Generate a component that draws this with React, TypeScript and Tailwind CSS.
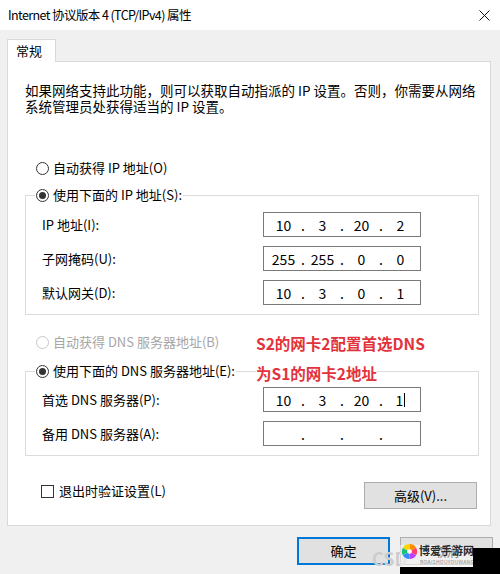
import React from "react";

const FONT = "[font-family:'Noto_Sans_CJK_SC',sans-serif]";

function Radio({ checked, disabled }: { checked?: boolean; disabled?: boolean }) {
  return (
    <span
      className={`flex h-[13px] w-[13px] shrink-0 items-center justify-center rounded-full border bg-white ${
        disabled ? "border-[#c8c8c8]" : "border-[#333333]"
      }`}
    >
      {checked && <span className="h-[7px] w-[7px] rounded-full bg-[#333333]" />}
    </span>
  );
}

function RadioLabel({ label, checked, disabled }: { label: string; checked?: boolean; disabled?: boolean }) {
  return (
    <div className={`flex h-[20px] items-center gap-[4px] ${disabled ? "text-[#a6a6a6]" : "text-black"}`}>
      <Radio checked={checked} disabled={disabled} />
      <span className="whitespace-nowrap">{label}</span>
    </div>
  );
}

function IpBox({ octets, caret }: { octets: string[]; caret?: boolean }) {
  return (
    <div className="grid h-[25px] w-[158px] grid-cols-[35px_4px_35px_4px_35px_4px_35px] items-center border border-[#7a7a7a] bg-white pl-[2px] text-[14px] leading-none text-black">
      {octets.map((o, i) => (
        <React.Fragment key={i}>
          {i > 0 && <span className="text-center">.</span>}
          <span className="flex items-center justify-center">
            {o}
            {caret && i === 3 && <span className="ml-[1px] inline-block h-[14px] w-px bg-black" />}
          </span>
        </React.Fragment>
      ))}
    </div>
  );
}

function FieldRow({ label, octets, caret }: { label: string; octets: string[]; caret?: boolean }) {
  return (
    <div className="grid grid-cols-[221px_158px] items-center pl-[16px]">
      <span className="whitespace-nowrap">{label}</span>
      <IpBox octets={octets} caret={caret} />
    </div>
  );
}

function GroupBox({ legend, children, className }: { legend: React.ReactNode; children: React.ReactNode; className?: string }) {
  return (
    <fieldset className={`border border-[#dcdcdc] px-0 pb-[9px] ${className ?? ""}`}>
      <legend className="ml-[9px] px-[1px]">{legend}</legend>
      {children}
    </fieldset>
  );
}

function Button({ children, primary, className }: { children: React.ReactNode; primary?: boolean; className?: string }) {
  return (
    <div
      className={`flex items-center justify-center bg-[#e1e1e1] text-black ${
        primary ? "border-2 border-[#0078d7]" : "border border-[#adadad]"
      } ${className ?? ""}`}
    >
      {children}
    </div>
  );
}

export default function App() {
  return (
    <div className={`relative h-[574px] w-[500px] overflow-hidden bg-[#f0f0f0] text-[13px] leading-[20px] text-black ${FONT}`}>
      {/* title bar */}
      <div className="flex h-[30px] items-center justify-between bg-white pl-[8px] pr-[10px]">
        <span className="whitespace-nowrap text-[12.5px] tracking-[-0.6px]">Internet 协议版本 4 (TCP/IPv4) 属性</span>
        <svg width="11" height="11" viewBox="0 0 11 11">
          <path d="M0.5 0.5 L10.5 10.5 M10.5 0.5 L0.5 10.5" stroke="#111" strokeWidth="1" fill="none" />
        </svg>
      </div>

      {/* tab area */}
      <div className="pl-[7px] pt-[9px]">
        <div className="relative z-10 -mb-px flex h-[23px] w-[49px] items-start border-l border-r border-t border-[#d9d9d9] bg-white pl-[8px] pt-[1px]">
          常规
        </div>
        <div className="w-[484px] border border-[#d9d9d9] bg-white pb-[16px] pl-[17px] pr-[11px] pt-[20px]">
          <p className="whitespace-nowrap text-[13.5px] leading-[16px]">
            如果网络支持此功能，则可以获取自动指派的 IP 设置。否则，你需要从网络
            <br />
            系统管理员处获得适当的 IP 设置。
          </p>

          <div className="ml-[11px] mt-[44px]">
            <RadioLabel label="自动获得 IP 地址(O)" />
          </div>

          <GroupBox className="mt-[7px]" legend={<RadioLabel label="使用下面的 IP 地址(S):" checked />}>
            <div className="flex flex-col gap-[9px] pt-[7px]">
              <FieldRow label="IP 地址(I):" octets={["10", "3", "20", "2"]} />
              <FieldRow label="子网掩码(U):" octets={["255", "255", "0", "0"]} />
              <FieldRow label="默认网关(D):" octets={["10", "3", "0", "1"]} />
            </div>
          </GroupBox>

          <div className="ml-[11px] mt-[17px]">
            <RadioLabel label="自动获得 DNS 服务器地址(B)" disabled />
          </div>

          <GroupBox className="mt-[9px]" legend={<RadioLabel label="使用下面的 DNS 服务器地址(E):" checked />}>
            <div className="flex flex-col gap-[9px] pt-[6px]">
              <FieldRow label="首选 DNS 服务器(P):" octets={["10", "3", "20", "1"]} caret />
              <FieldRow label="备用 DNS 服务器(A):" octets={["", "", "", ""]} />
            </div>
          </GroupBox>

          <div className="mt-[26px] flex items-start justify-between pr-[2px]">
            <div className="ml-[16px] flex h-[18px] items-center gap-[5px]">
              <span className="h-[13px] w-[13px] border border-[#333333] bg-white" />
              <span className="whitespace-nowrap">退出时验证设置(L)</span>
            </div>
            <Button className="h-[27px] w-[113px]">高级(V)...</Button>
          </div>
        </div>
      </div>

      {/* dialog buttons */}
      <div className="mt-[11px] flex justify-end gap-[10px] pr-[7px]">
        <Button primary className="h-[28px] w-[93px]">确定</Button>
        <Button className="h-[28px] w-[93px]">取消</Button>
      </div>

      {/* annotation */}
      <div className="absolute left-[256px] top-[328px] text-[15.5px] font-bold leading-[30px] text-[#e3323b]">
        <div className="whitespace-nowrap">S2的网卡2配置首选DNS</div>
        <div className="whitespace-nowrap">
          <span className="bg-white">为S1的网卡2地址</span>
        </div>
      </div>

      {/* site watermark */}
      <span className="absolute left-[372px] top-[547px] text-[18px] font-semibold leading-[22px] text-[#cdcdcd]">CSD</span>
      <div className="absolute left-[400px] top-[545px] h-[22px] w-[73px] bg-white/50" />
      <svg className="absolute left-[401px] top-[543px]" width="17" height="17" viewBox="0 0 18 18">
        <path d="M9 9 L9 1 A8 8 0 0 1 16 5 Z" fill="#ff8a00" />
        <path d="M9 9 L16 5 A8 8 0 0 1 16 13 Z" fill="#ff3d6e" />
        <path d="M9 9 L16 13 A8 8 0 0 1 9 17 Z" fill="#c03cff" />
        <path d="M9 9 L9 17 A8 8 0 0 1 2 13 Z" fill="#2f8bff" />
        <path d="M9 9 L2 13 A8 8 0 0 1 2 5 Z" fill="#19c37d" />
        <path d="M9 9 L2 5 A8 8 0 0 1 9 1 Z" fill="#ffd400" />
        <circle cx="9" cy="9" r="2.5" fill="#fff" />
      </svg>
      <span className="absolute left-[419px] top-[543px] text-[11px] font-bold leading-[15px] text-[#2a2a2a]">博爱手游网</span>
      <span className="absolute left-[420px] top-[559px] text-[5px] leading-[6px] tracking-[0.3px] text-[#8a8a8a]">BOAISHOUYOUWANG</span>
      <div className="absolute left-[473px] top-[548px] h-[26px] w-[27px] bg-black" />
      <div className="absolute left-[400px] top-[567px] h-[7px] w-[100px] bg-black" />
    </div>
  );
}
